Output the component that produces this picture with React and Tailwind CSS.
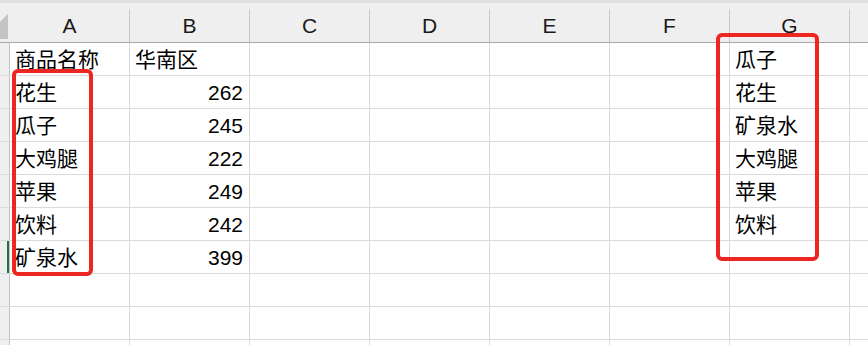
import React from 'react';

const COLS = ['A', 'B', 'C', 'D', 'E', 'F', 'G'];

const rows = [
    { a: '商品名称', b: '华南区', g: '瓜子', header: true },
    { a: '花生', b: '262', g: '花生' },
    { a: '瓜子', b: '245', g: '矿泉水' },
    { a: '大鸡腿', b: '222', g: '大鸡腿' },
    { a: '苹果', b: '249', g: '苹果' },
    { a: '饮料', b: '242', g: '饮料' },
    { a: '矿泉水', b: '399', g: '', active: true },
    { a: '', b: '', g: '' },
    { a: '', b: '', g: '' },
    { a: '', b: '', g: '' },
];

const font = { fontFamily: '"Liberation Sans", "Noto Sans CJK SC", sans-serif' };

const Cell = ({ children, align = 'left' }) => (
    <div
        className={`w-[120px] h-full shrink-0 flex items-center border-r border-[#dadada] text-[21px] leading-none text-black ${
            align === 'right' ? 'justify-end pr-[6px]' : 'pl-[5px]'
        }`}
    >
        {children}
    </div>
);

export default function App() {
    return (
        <div className="relative w-[868px] h-[345px] overflow-hidden bg-white" style={font}>
            {/* top strip */}
            <div className="h-[3px] bg-[#e0e0e0]" />

            {/* column headers */}
            <div className="flex h-[40px] bg-[#efefef] border-b border-[#a8a8a8]">
                <div className="w-[10px] shrink-0 flex items-end">
                    <svg width="10" height="40" viewBox="0 0 10 40">
                        <polygon points="8,12 8,37 -18,37" fill="#c4c4c4" />
                    </svg>
                </div>
                {COLS.map((c) => (
                    <div key={c} className="w-[120px] shrink-0 flex">
                        <div className="flex-1 flex items-center justify-center pt-[6px] text-[21px] leading-none text-[#1a1a1a]">
                            {c}
                        </div>
                        <div className="w-px h-[33px] self-end bg-[#c8c8c8]" />
                    </div>
                ))}
            </div>

            {/* grid rows */}
            {rows.map((r, i) => (
                <div key={i} className="flex h-[33px] border-b border-[#dadada]">
                    <div className="w-[10px] shrink-0 flex justify-end bg-[#efefef] border-r border-[#c4c4c4]">
                        {r.active && <div className="w-[2px] h-full bg-[#217346]" />}
                    </div>
                    <Cell>{r.a}</Cell>
                    <Cell align={r.header ? 'left' : 'right'}>{r.b}</Cell>
                    <Cell />
                    <Cell />
                    <Cell />
                    <Cell />
                    <Cell>{r.g}</Cell>
                </div>
            ))}

            {/* highlight boxes */}
            <div className="absolute left-[12px] top-[69px] w-[81px] h-[207px] border-[4px] border-[#ec2620] rounded-[6px]" />
            <div className="absolute left-[716px] top-[33px] w-[103px] h-[228px] border-[4px] border-[#ec2620] rounded-[6px]" />
        </div>
    );
}
